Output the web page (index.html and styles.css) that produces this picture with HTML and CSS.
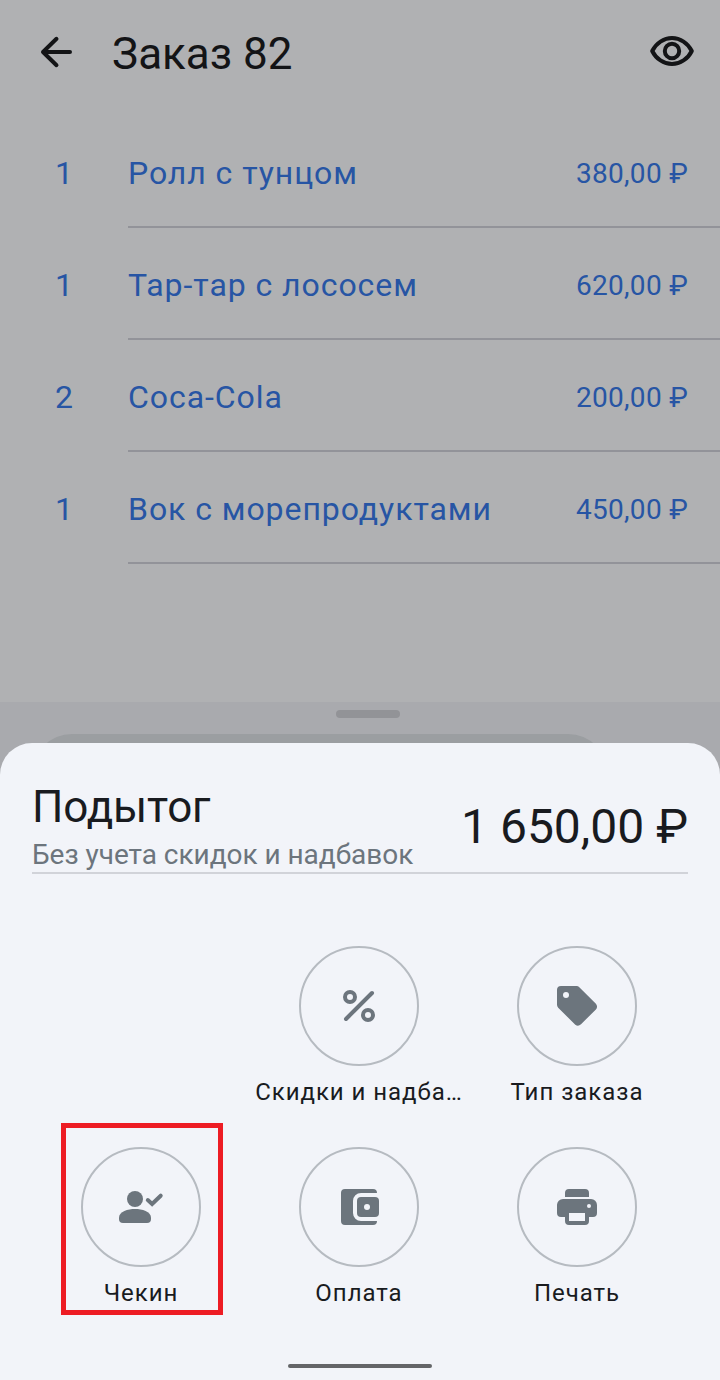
FILE: index.html
```html
<!DOCTYPE html>
<html lang="ru">
<head>
<meta charset="utf-8">
<title>Заказ 82</title>
<link rel="stylesheet" href="styles.css">
</head>
<body>
<div class="screen">
  <main class="order">
    <header class="topbar">
      <svg class="back" viewBox="0 0 40 40"><path d="M38 20H11M24.500 6.800 11 20l13.500 13.200"/></svg>
      <h1 class="title">Заказ 82</h1>
      <svg class="eye" viewBox="0 0 48 40"><path d="M4.200 20C8 12.300 15.800 7 24 7s16 5.300 19.800 13C40 27.800 32.200 33 24 33S8 27.800 4.200 20Z"/><circle cx="24" cy="20" r="7.200"/></svg>
    </header>
    <ul class="items">
      <li class="item"><span class="qty">1</span><div class="line"><span class="name">Ролл с тунцом</span><span class="price">380,00 ₽</span></div></li>
      <li class="item"><span class="qty">1</span><div class="line"><span class="name">Тар-тар с лососем</span><span class="price">620,00 ₽</span></div></li>
      <li class="item"><span class="qty">2</span><div class="line"><span class="name">Coca-Cola</span><span class="price">200,00 ₽</span></div></li>
      <li class="item"><span class="qty">1</span><div class="line"><span class="name">Вок с морепродуктами</span><span class="price">450,00 ₽</span></div></li>
    </ul>
  </main>
  <div class="drawer">
    <div class="handle"></div>
    <div class="pill"></div>
  </div>
  <section class="sheet">
    <div class="summary">
      <div class="caption">
        <h2 class="subtotal">Подытог</h2>
        <p class="note">Без учета скидок и надбавок</p>
      </div>
      <div class="total">1 650,00 ₽</div>
    </div>
    <div class="actions">
      <div class="action discount">
        <svg class="icon" viewBox="0 0 120 120"><circle class="ring" cx="60" cy="60" r="59"/><g class="stroke"><circle cx="51" cy="51" r="5"/><circle cx="69" cy="69" r="5"/><path d="M47 73 73 47"/></g></svg>
        <span class="label">Скидки и надба…</span>
      </div>
      <div class="action">
        <svg class="icon" viewBox="0 0 120 120"><circle class="ring" cx="60" cy="60" r="59"/><path class="solid" d="M44 40H59.500Q61.200 40 62.300 41.200L78.900 57.800Q81.200 60.700 78.900 63.400L64 78.300Q61.200 81 58.300 78.800L41.200 61.700Q40 60.500 40 58.800V44Q40 40 44 40Z"/><circle class="hole" cx="49" cy="49" r="3"/></svg>
        <span class="label">Тип заказа</span>
      </div>
      <div class="action checkin">
        <svg class="icon" viewBox="0 0 120 120"><circle class="ring" cx="60" cy="60" r="59"/><circle class="solid" cx="54" cy="52" r="8"/><path class="solid" d="M42 76H66A4 4 0 0 0 70 72V70.500C70 64.500 61 62 54 62S38 64.500 38 70.500V72A4 4 0 0 0 42 76Z"/><path class="stroke" d="M66.800 53 71.100 56.900 79.700 48.700"/></svg>
        <span class="label">Чекин</span>
        <div class="highlight"></div>
      </div>
      <div class="action">
        <svg class="icon" viewBox="0 0 120 120"><circle class="ring" cx="60" cy="60" r="59"/><path class="solid" d="M46 42H74A4 4 0 0 1 78 46H62A8 8 0 0 0 54 54V66A8 8 0 0 0 62 74H78A4 4 0 0 1 74 78H46A4 4 0 0 1 42 74V46A4 4 0 0 1 46 42Z"/><rect class="solid" x="58" y="50" width="22" height="20" rx="4"/><circle class="hole" cx="68" cy="60" r="3"/></svg>
        <span class="label">Оплата</span>
      </div>
      <div class="action">
        <svg class="icon" viewBox="0 0 120 120"><circle class="ring" cx="60" cy="60" r="59"/><path class="solid" d="M48 50V46A4 4 0 0 1 52 42H68A4 4 0 0 1 72 46V50ZM46 52H74A6 6 0 0 1 80 58V66A4 4 0 0 1 76 70H72V74A4 4 0 0 1 68 78H52A4 4 0 0 1 48 74V70H44A4 4 0 0 1 40 66V58A6 6 0 0 1 46 52Z"/><path class="hole" d="M52 66H68V74H52Z"/><circle class="hole" cx="72" cy="59" r="2"/></svg>
        <span class="label">Печать</span>
      </div>
    </div>
    <div class="homebar"></div>
  </section>
</div>
</body>
</html>
```
FILE: styles.css
```css
* { box-sizing: border-box; }
body { margin: 0; font-family: Roboto, "Noto Sans", sans-serif; }
h1, h2, p, ul { margin: 0; padding: 0; font-weight: 400; }
.screen { width: 720px; height: 1380px; display: flex; flex-direction: column; overflow: hidden; background: #a9aaae; }
.order { height: 702px; background: #b0b1b3; }
.topbar { height: 116px; padding: 32px 24px 0 32px; display: flex; align-items: flex-start; }
.back { width: 40px; height: 40px; fill: none; stroke: #131416; stroke-width: 4; stroke-linecap: round; stroke-linejoin: round; }
.title { margin-left: 40px; margin-top: -4px; flex: 1; font-size: 44px; line-height: 52px; color: #131416; }
.eye { width: 48px; height: 40px; margin-top: -1px; fill: none; stroke: #131416; stroke-width: 4; stroke-linejoin: round; }
.items { list-style: none; }
.item { display: flex; height: 112px; color: #2755a4; }
.qty { width: 128px; text-align: center; font-size: 32px; line-height: 114px; }
.line { flex: 1; display: flex; justify-content: space-between; padding-right: 32px; border-bottom: 2px solid #929399; line-height: 114px; white-space: nowrap; }
.name { font-size: 32px; letter-spacing: 0.94px; }
.price { font-size: 28px; line-height: 116px; letter-spacing: 0.28px; }
.drawer { height: 41px; display: flex; flex-direction: column; padding-top: 8px; }
.handle { width: 64px; height: 8px; margin-left: 336px; border-radius: 4px; background: #929397; flex: none; }
.pill { width: 576px; height: 80px; margin: 16px 0 0 32px; border-radius: 40px; background: #9b9ea1; flex: none; }
.sheet { position: relative; height: 637px; padding: 0 32px; border-radius: 32px 32px 0 0; background: #f2f4f9; color: #191b1f; }
.summary { height: 131px; display: flex; justify-content: space-between; border-bottom: 2px solid #d1d3d9; white-space: nowrap; }
.caption { padding-top: 38px; }
.subtotal { font-size: 44px; line-height: 52px; letter-spacing: -0.15px; }
.note { font-size: 28px; line-height: 32px; padding-top: 6px; letter-spacing: -0.04px; color: #6c757d; }
.total { padding-top: 56px; font-size: 48px; line-height: 56px; }
.actions { display: grid; grid-template-columns: repeat(3, 218px); grid-auto-rows: 201px; padding-top: 72px; }
.action { position: relative; display: flex; flex-direction: column; align-items: center; }
.discount { grid-column: 2; }
.checkin { grid-column: 1; }
.icon { width: 120px; height: 120px; flex: none; }
.ring { fill: none; stroke: #b6bbc1; stroke-width: 2; }
.solid { fill: #6c757d; }
.hole { fill: #f2f4f9; }
.stroke { fill: none; stroke: #6c757d; stroke-width: 4; stroke-linecap: round; }
.label { margin-top: 12px; font-size: 24px; line-height: 28px; letter-spacing: 0.96px; white-space: nowrap; }
.highlight { position: absolute; left: 29px; top: -24px; width: 162px; height: 192px; border: 5px solid #ed1c24; }
.homebar { width: 144px; height: 4px; margin: 16px auto 0; border-radius: 2px; background: #646568; }
```
